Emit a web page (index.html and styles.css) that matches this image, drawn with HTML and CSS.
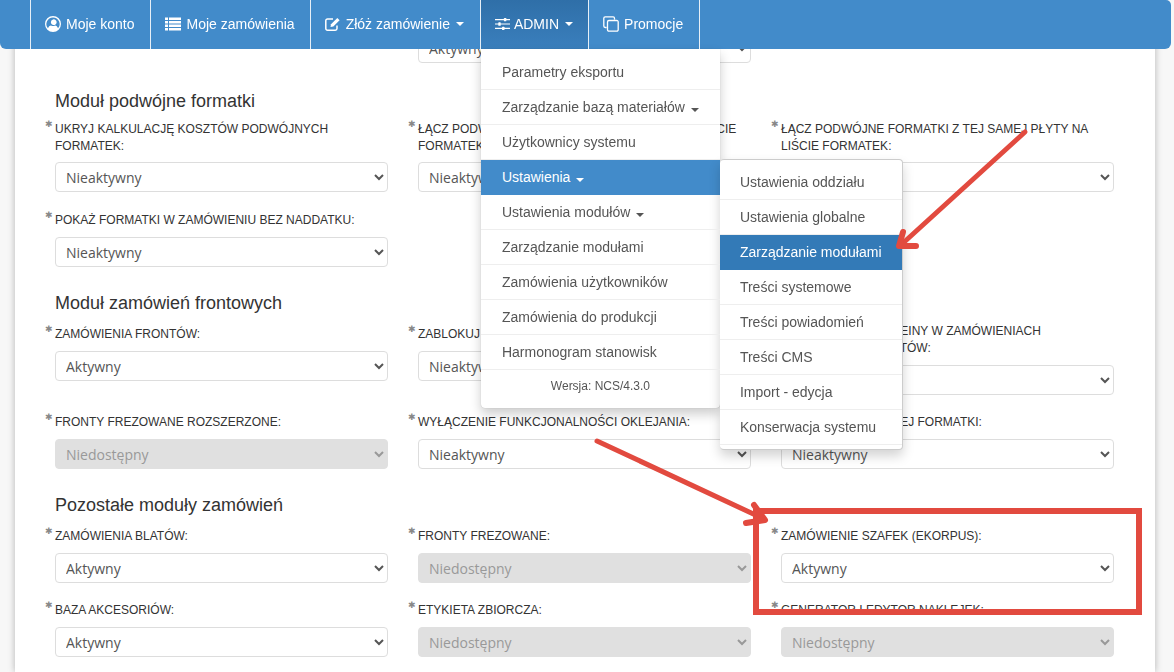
FILE: index.html
```html
<!DOCTYPE html>
<html lang="pl">
<head>
<meta charset="utf-8">
<title>Moduły</title>
<link rel="stylesheet" href="styles.css">
</head>
<body>
<nav class="navbar">
  <ul class="nav">
    <li class="nav-item"><a><svg class="ico" viewBox="0 0 16 16"><path fill-rule="evenodd" d="M8 0a8 8 0 1 0 0 16A8 8 0 0 0 8 0zm0 1.400a6.600 6.600 0 0 1 5 10.900c-.5-1.700-1.700-2.600-3-2.800-.6.400-1.300.600-2 .600s-1.400-.2-2-.6c-1.300.2-2.500 1.100-3 2.800A6.600 6.600 0 0 1 8 1.400zm0 2a2.900 2.900 0 1 1 0 5.600 2.900 2.900 0 0 1 0-5.600z"/></svg>Moje konto</a></li>
    <li class="nav-item"><a><svg class="ico" viewBox="0 0 16 14"><path d="M0 .5h3V3H0zM4 .5h12V3H4zM0 4h3v2.500H0zM4 4h12v2.500H4zM0 7.500h3V10H0zM4 7.500h12V10H4zM0 11h3v2.500H0zM4 11h12v2.500H4z"/></svg>Moje zamówienia</a></li>
    <li class="nav-item"><a><svg class="ico" viewBox="0 0 16 14"><path fill="none" stroke="currentColor" stroke-width="1.500" d="M12 8.500v3a1.700 1.700 0 0 1-1.700 1.700H2.500A1.700 1.700 0 0 1 .8 11.500V3.700A1.700 1.700 0 0 1 2.500 2H8"/><path d="M6 7.200 12.300.9l2.300 2.300L8.300 9.500 5.500 10z"/></svg>Złóż zamówienie<span class="caret"></span></a></li>
    <li class="nav-item active"><a><svg class="ico" viewBox="0 0 16 14"><path d="M0 1.700h16v1.200H0zM0 6.400h16v1.200H0zM0 11.100h16v1.200H0z"/><rect x="9.500" y=".5" width="2.600" height="3.600" rx=".6"/><rect x="3.500" y="5.200" width="2.600" height="3.600" rx=".6"/><rect x="7.500" y="9.900" width="2.600" height="3.600" rx=".6"/></svg>ADMIN<span class="caret"></span></a>
      <ul class="menu">
        <li><a>Parametry eksportu</a></li>
        <li><a>Zarządzanie bazą materiałów<span class="caret"></span></a></li>
        <li><a>Użytkownicy systemu</a></li>
        <li class="open"><a>Ustawienia<span class="caret"></span></a>
          <ul class="menu submenu">
            <li><a>Ustawienia oddziału</a></li>
            <li><a>Ustawienia globalne</a></li>
            <li class="selected"><a>Zarządzanie modułami</a></li>
            <li><a>Treści systemowe</a></li>
            <li><a>Treści powiadomień</a></li>
            <li><a>Treści CMS</a></li>
            <li><a>Import - edycja</a></li>
            <li><a>Konserwacja systemu</a></li>
          </ul>
        </li>
        <li><a>Ustawienia modułów<span class="caret"></span></a></li>
        <li><a>Zarządzanie modułami</a></li>
        <li><a>Zamówienia użytkowników</a></li>
        <li><a>Zamówienia do produkcji</a></li>
        <li><a>Harmonogram stanowisk</a></li>
        <li class="version">Wersja: NCS/4.3.0</li>
      </ul>
    </li>
    <li class="nav-item"><a><svg class="ico" viewBox="0 0 16 16"><path fill="none" stroke="currentColor" stroke-width="1.300" d="M3.500 11.500H2.200A1.400 1.400 0 0 1 .8 10.100V2.200A1.400 1.400 0 0 1 2.200.8h7.900a1.400 1.400 0 0 1 1.400 1.400v1.300M5.900 4.500h7.900a1.400 1.400 0 0 1 1.400 1.400v7.900a1.400 1.400 0 0 1-1.400 1.400H5.900a1.400 1.400 0 0 1-1.400-1.400V5.900a1.400 1.400 0 0 1 1.400-1.400z"/></svg>Promocje</a></li>
  </ul>
</nav>

<main class="panel">
  <section class="row first-row">
    <div class="field"></div>
    <div class="field"><select><option>Aktywny</option></select></div>
    <div class="field"></div>
  </section>

  <section class="group group-first">
    <h3>Moduł podwójne formatki</h3>
    <div class="row">
      <div class="field two"><label>UKRYJ KALKULACJĘ KOSZTÓW PODWÓJNYCH FORMATEK:</label><select><option>Nieaktywny</option></select></div>
      <div class="field two"><label>ŁĄCZ PODWÓJNE FORMATKI Z INNEJ PŁYTY NA LIŚCIE FORMATEK:</label><select><option>Nieaktywny</option></select></div>
      <div class="field two"><label>ŁĄCZ PODWÓJNE FORMATKI Z TEJ SAMEJ PŁYTY NA LIŚCIE FORMATEK:</label><select><option>Nieaktywny</option></select></div>
      <div class="field"><label>POKAŻ FORMATKI W ZAMÓWIENIU BEZ NADDATKU:</label><select><option>Nieaktywny</option></select></div>
    </div>
  </section>

  <section class="group">
    <h3>Moduł zamówień frontowych</h3>
    <div class="row">
      <div class="field"><label>ZAMÓWIENIA FRONTÓW:</label><select><option>Aktywny</option></select></div>
      <div class="field"><label>ZABLOKUJ EDYCJĘ FRONTÓW:</label><select><option>Nieaktywny</option></select></div>
      <div class="field two"><label>POKAŻ RODZAJ OKLEINY W ZAMÓWIENIACH<br>NA WYDRUKU FRONTÓW:</label><select><option>Nieaktywny</option></select></div>
      <div class="field"><label>FRONTY FREZOWANE ROZSZERZONE:</label><select disabled><option>Niedostępny</option></select></div>
      <div class="field"><label>WYŁĄCZENIE FUNKCJONALNOŚCI OKLEJANIA:</label><select><option>Nieaktywny</option></select></div>
      <div class="field"><label>ETYKIETY DLA KAŻDEJ FORMATKI:</label><select><option>Nieaktywny</option></select></div>
    </div>
  </section>

  <section class="group">
    <h3>Pozostałe moduły zamówień</h3>
    <div class="row">
      <div class="field"><label>ZAMÓWIENIA BLATÓW:</label><select><option>Aktywny</option></select></div>
      <div class="field"><label>FRONTY FREZOWANE:</label><select disabled><option>Niedostępny</option></select></div>
      <div class="field"><label>ZAMÓWIENIE SZAFEK (EKORPUS):</label><select><option>Aktywny</option></select></div>
      <div class="field"><label>BAZA AKCESORIÓW:</label><select><option>Aktywny</option></select></div>
      <div class="field"><label>ETYKIETA ZBIORCZA:</label><select disabled><option>Niedostępny</option></select></div>
      <div class="field"><label>GENERATOR I EDYTOR NAKLEJEK:</label><select disabled><option>Niedostępny</option></select></div>
    </div>
  </section>
</main>

<svg class="annotations" viewBox="0 0 1174 672" aria-hidden="true">
  <g fill="none" stroke="#e24a3f" stroke-linecap="round" stroke-linejoin="round">
    <path stroke-width="5" d="M1025 132 902 244"/>
    <path stroke-width="6" d="M916 246 899 246 903 232"/>
    <path stroke-width="5" d="M597 441 762 518"/>
    <path stroke-width="6" d="M754 505 765 520 746 523"/>
    <rect x="756" y="511" width="383" height="101" stroke-width="6" stroke-linecap="butt" stroke-linejoin="miter"/>
  </g>
</svg>
</body>
</html>
```
FILE: styles.css
```css
* { box-sizing: border-box; }
html, body { height: 100%; }
body {
  margin: 0;
  overflow: hidden;
  background: #f7f7f7;
  color: #333;
  font-family: "Liberation Sans", Arial, sans-serif;
  font-size: 14px;
}
ul { list-style: none; margin: 0; padding: 0; }

/* Top navigation */
.navbar {
  position: fixed;
  top: 0;
  left: 0;
  width: 1171px;
  height: 49px;
  z-index: 10;
  background: #428bca;
  border-radius: 0 5px 6px 6px;
}
.nav { display: flex; padding-left: 30px; height: 49px; }
.nav-item {
  position: relative;
  border-left: 1px solid #e6eff7;
  height: 49px;
}
.nav-item:last-child { border-right: 1px solid #e6eff7; }
.nav-item > a {
  display: flex;
  align-items: center;
  height: 49px;
  padding: 0 16px 2px 14px;
  color: #fff;
  white-space: nowrap;
}
.nav-item:nth-child(2) > a { padding-right: 15px; }
.nav-item.active > a {
  padding-right: 15px;
  background: linear-gradient(to bottom, #2f6fa8, #3a7fbd 100%);
}
.ico { width: 16px; height: 16px; margin-right: 5px; fill: currentColor; flex: none; }
.nav-item.active .ico { width: 15px; margin-right: 4px; }
.caret {
  display: inline-block;
  width: 0;
  height: 0;
  margin-left: 6px;
  border-top: 4px solid currentColor;
  border-left: 4px solid transparent;
  border-right: 4px solid transparent;
}

/* Dropdown menus */
.menu {
  position: absolute;
  top: 49px;
  left: 0;
  width: 239px;
  padding-top: 6px;
  background: #fff;
  border-radius: 0 0 4px 4px;
  box-shadow: 0 6px 12px rgba(0, 0, 0, .2), 0 0 1px rgba(0, 0, 0, .3);
  color: #555;
}
.menu > li { position: relative; }
.menu > li > a {
  display: block;
  height: 35px;
  line-height: 35px;
  padding-left: 21px;
  border-bottom: 1px solid #eee;
  white-space: nowrap;
}
.menu > li.open > a { background: #428bca; color: #fff; border-bottom-color: #428bca; }
.version {
  height: 38px;
  padding-top: 7px;
  text-align: center;
  font-size: 12px;
  line-height: 18px;
}
.submenu {
  top: -1px;
  left: 239px;
  width: 183px;
  height: 291px;
  padding-top: 5px;
  border-radius: 4px;
  border-top: 1px solid #ccc;
  border-right: 1px solid #ccc;
  border-bottom: 1px solid #ccc;
  box-shadow: 0 6px 12px rgba(0, 0, 0, .175);
}
.submenu > li > a { padding-left: 20px; }
.submenu > li.selected > a { background: #337ab7; color: #fff; border-bottom-color: #337ab7; }

/* Form panel */
.panel {
  width: 1140px;
  height: 100%;
  margin-left: 15px;
  padding: 33px 41px 0 40px;
  background: #fff;
  box-shadow: 0 0 7px rgba(0, 0, 0, .28);
}
.row {
  display: grid;
  grid-template-columns: repeat(3, 333px);
  column-gap: 30px;
  row-gap: 16px;
  align-items: start;
}
.group { margin-top: 26px; }
.group h3 {
  margin: 0 0 10px;
  font-size: 18px;
  font-weight: 400;
  line-height: 20px;
  color: #333;
}
.group-first { margin-top: 28px; }
.group-first .row { row-gap: 17px; }
.field { position: relative; padding-top: 3px; }
.field.two { padding-top: 0; }
.first-row .field { padding-top: 0; }
.field label {
  position: relative;
  display: block;
  margin-bottom: 8px;
  font-size: 12px;
  line-height: 17px;
  color: #333;
}
.group-first .two label { margin-bottom: 7px; }
.field label::before {
  content: "\2731";
  position: absolute;
  left: -10px;
  top: -4px;
  color: #888;
  font-family: "DejaVu Sans", sans-serif;
  font-size: 9px;
  line-height: 14px;
}
select {
  display: block;
  width: 100%;
  height: 30px;
  padding: 0 6px;
  background-color: #fff;
  border: 1px solid #ddd;
  border-radius: 4px;
  color: #555;
  font-family: "Open Sans", sans-serif;
  font-size: 14px;
}
select:disabled {
  background-color: #e0e0e0;
  border-color: #e0e0e0;
  color: #999;
  opacity: 1;
}

/* Red annotations over the screenshot */
.annotations {
  position: fixed;
  top: 0;
  left: 0;
  width: 1174px;
  height: 672px;
  z-index: 20;
  pointer-events: none;
}
```
